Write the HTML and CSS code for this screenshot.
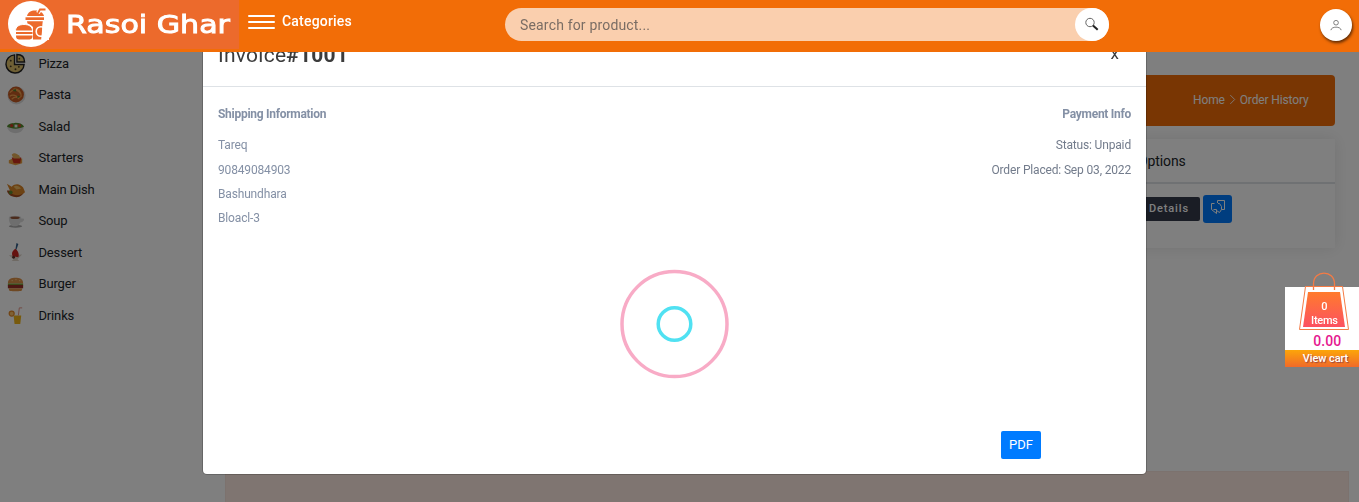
FILE: index.html
```html
<!DOCTYPE html>
<html lang="en">
<head>
<meta charset="utf-8">
<title>Rasoi Ghar - Order History</title>
<link rel="stylesheet" href="styles.css">
</head>
<body>
<header class="topbar">
  <div class="brand">
    <svg class="brand-mark" viewBox="0 0 48 48"><circle cx="24" cy="24" r="23" fill="#fff"/>
      <g fill="#ec6a2c"><path d="M20 16c1-4 4-5.500 8-5.500 5 0 8 2 9 5.500z"/><path d="M31 13l2-3.500h5.500" fill="none" stroke="#fff" stroke-width="4"/><path d="M31 13l2-3.500h5.500" fill="none" stroke="#ec6a2c" stroke-width="1.800"/><path d="M18.500 17.300h18.500v2.700H18.500z"/><path d="M20 21.300h15.800L34.300 39.500H26V27c-2-2-3.500-3-5.500-3.500z"/><circle cx="34" cy="31.500" r="4.800" fill="none" stroke="#fff" stroke-width="1.600"/><path d="M36 21h6v19h-7.500z" fill="#fff"/><path d="M8.500 31c0-4.500 3.500-6.500 8.500-6.500s8.500 2 8.500 6.500z" stroke="#fff" stroke-width="1"/><path d="M9 32h16.500v2H9zM9 35.500h16.500c0 3-1 4-4 4H13c-3 0-4-1-4-4z"/></g>
    </svg>
    <svg class="brand-name" viewBox="0 0 166 32"><text x="0" y="25" textLength="164" lengthAdjust="spacingAndGlyphs">Rasoi Ghar</text></svg>
  </div>
  <div class="categories"><span class="bars"><i></i><i></i><i></i></span><span class="categories-label">Categories</span></div>
  <div class="search"><span>Search for product...</span>
    <button class="search-btn" aria-label="Search"><svg viewBox="0 0 16 16"><circle cx="6" cy="5.500" r="4.200" fill="none" stroke="#666" stroke-width="1"/><path d="M9 8.500l4.700 4.300" stroke="#222" stroke-width="2"/></svg></button>
  </div>
  <button class="user" aria-label="Account"><svg viewBox="0 0 14 14" fill="none" stroke="#666" stroke-width=".9"><circle cx="6.500" cy="4" r="2.500"/><path d="M1 12c.5-4.300 10.500-4.300 11 0"/></svg></button>
</header>

<div class="page">
  <nav class="sidebar">
    <a><svg viewBox="0 0 22 22"><path d="M10 2a9.500 9.500 0 1 0 10 10H10z" fill="#dfc06a" stroke="#222" stroke-width="1.500"/><path d="M12.500 1.500v8h8c0-5-3-8-8-8z" fill="#dfc06a" stroke="#222" stroke-width="1.500"/><g fill="#443822"><circle cx="6" cy="8" r="1"/><circle cx="6" cy="14" r="1"/><circle cx="11" cy="17" r="1"/><circle cx="14.500" cy="14.500" r="1"/><circle cx="15" cy="6" r=".9"/></g></svg><span>Pizza</span></a>
    <a><svg viewBox="0 0 22 22"><circle cx="12" cy="12" r="9.500" fill="#ddd"/><circle cx="11.500" cy="11" r="8.300" fill="#c45a22"/><path d="M5 9c4-5 9-3 12 2M5 13c5-5 9 4 12 0M7 16c3-3 6-3 8 0M9 5c5 0 8 3 8 8" fill="none" stroke="#f3a14e" stroke-width="1.200"/><path d="M8 7l3-2 1 3zM13 12l3 1-3 2z" fill="#4b822e"/></svg><span>Pasta</span></a>
    <a><svg viewBox="0 0 22 22"><path d="M2 11h18c-1 5-5 7-9 7s-8-2-9-7z" fill="#ddd"/><path d="M2 11c2-4 6-3 9-4 4 0 7 1 9 4-5 3-13 3-18 0z" fill="#548b2d"/><circle cx="7" cy="10" r="1.700" fill="#cc3820"/><circle cx="15" cy="10" r="1.700" fill="#d64426"/><path d="M10 9h3v3h-3z" fill="#eee"/></svg><span>Salad</span></a>
    <a><svg viewBox="0 0 22 22"><path d="M4 14l4-2h10v5l-7 2-7-2z" fill="#e9a042"/><path d="M7 11h10l-1 6H9z" fill="#cf2f1d"/><path d="M7 8c3-3 5-1 8 1l1 3H9z" fill="#e6ae58"/></svg><span>Starters</span></a>
    <a><svg viewBox="0 0 22 22"><path d="M2 12h18c0 4-4 7-8 7s-9-2-10-7z" fill="#a44b1c"/><path d="M2 5l5 3c4-4 9-3 12 1l2 5c-5 4-12 4-15 0z" fill="#d98427"/><path d="M9 8c3-2 6 0 8 2l-5 1z" fill="#f2bc62"/><circle cx="6" cy="14" r="2" fill="#5d862d"/></svg><span>Main Dish</span></a>
    <a><svg viewBox="0 0 22 22"><ellipse cx="11" cy="17" rx="7" ry="1.500" fill="#aaa"/><path d="M4 8h13c0 5-2 9-7 9-4 0-6-4-6-9zM17 9h2c2 0 1 4-3 4" fill="#ddd"/><ellipse cx="10.500" cy="8" rx="6.500" ry="2" fill="#ddd"/><ellipse cx="10.500" cy="8.200" rx="5" ry="1.300" fill="#98583b"/></svg><span>Soup</span></a>
    <a><svg viewBox="0 0 22 22"><path d="M4 14l14-1-5 5 2 2H7l2-2z" fill="#ded4c8"/><path d="M8 15c-2-4 1-7 3-8 3 3 4 5 3 9z" fill="#ca241e"/><path d="M11 7l1-6 2 1-2 6z" fill="#315d88"/><circle cx="9" cy="16" r="1.500" fill="#623128"/></svg><span>Dessert</span></a>
    <a><svg viewBox="0 0 22 22"><path d="M3 11c0-5 4-6 8-6s8 1 8 6z" fill="#dc9147"/><path d="M3 11h16v2H3z" fill="#779d35"/><path d="M3 12.500h16V16H3z" fill="#982f26"/><path d="M4 16h14c0 3-1 3-4 3H8c-3 0-4 0-4-3z" fill="#dc9147"/><path d="M7 8h1M11 7h1M15 8h1" stroke="#ffe0a0"/></svg><span>Burger</span></a>
    <a><svg viewBox="0 0 22 22"><circle cx="7" cy="9" r="2.600" fill="#ffc368" stroke="#e58928" stroke-width="1.300"/><path d="M9 11h8l-1 9h-6z" fill="#f0b519"/><path d="M14 11l1-8h3" fill="none" stroke="#e49183" stroke-width="1"/></svg><span>Drinks</span></a>
  </nav>
  <main class="content">
    <section class="crumbs"><span>Home</span><svg viewBox="0 0 8 10"><path d="M2 1l4 4-4 4" fill="none" stroke="#fff" stroke-width=".8"/></svg><span>Order History</span></section>
    <section class="orders">
      <div class="orders-head">Options</div>
      <div class="orders-row"><button class="details">Details</button><button class="copy" aria-label="Refund"><svg viewBox="0 0 16 16" fill="none" stroke="#fff" stroke-width="1"><path d="M7.500 4V1.500h7v9h-3"/><path d="M4.500 4.500h-3v6l5 4v-4h-3M8 4.500h1.500l2 3v3l-2 3-3-2"/></svg></button></div>
    </section>
    <footer class="footer"></footer>
  </main>
</div>

<div class="backdrop">
  <div class="modal">
    <div class="modal-head"><h1>Invoice<b>#1001</b></h1><span class="close">x</span></div>
    <div class="modal-body">
      <div class="info"><h2>Shipping Information</h2><p>Tareq</p><p>90849084903</p><p>Bashundhara</p><p>Bloacl-3</p></div>
      <div class="info info-right"><h2>Payment Info</h2><p>Status: Unpaid</p><p>Order Placed: Sep 03, 2022</p></div>
    </div>
    <div class="loader"><svg viewBox="0 0 110 110" fill="none"><circle cx="55.500" cy="55" r="52.500" stroke="#f8abc6" stroke-width="3.500"/><circle cx="55.500" cy="55" r="16.300" stroke="#50e1f2" stroke-width="3.500"/></svg></div>
    <div class="modal-foot"><button class="pdf">PDF</button></div>
  </div>
</div>

<aside class="cart">
  <div class="cart-box">
    <svg class="bag" viewBox="0 0 52 59"><defs><linearGradient id="bag" x2="0" y2="1"><stop stop-color="#ff7b2d"/><stop offset="1" stop-color="#fc5161"/></linearGradient></defs><path d="M7.500 14.500h37l6 43h-49z" fill="#fff" stroke="#f47b45"/><path d="M10 20h32l5 35H5z" fill="url(#bag)"/><path d="M15.500 18v-6C15.500-2.500 36.500-2.500 36.500 12v6" fill="none" stroke="#f47b45" stroke-width="1.300"/><text x="26.500" y="38">0</text><text x="26.500" y="52" textLength="27">Items</text></svg>
    <div class="total">0.00</div>
  </div>
  <div class="view-cart">View cart</div>
</aside>
</body>
</html>
```
FILE: styles.css
```css
* { box-sizing: border-box; }
body { margin: 0; height: 502px; overflow: hidden; background: #fff; font-family: Roboto, "Liberation Sans", sans-serif; font-size: 13px; color: #212529; }
button { border: 0; padding: 0; font: inherit; display: flex; align-items: center; justify-content: center; }
h1, h2, p { margin: 0; }
.topbar { position: fixed; inset: 0 0 auto; z-index: 10; height: 52px; background: #f26d07; display: flex; align-items: flex-start; }
.brand { width: 239px; height: 49px; background: #ec6a2c; padding: 0 0 0 7px; display: flex; }
.brand-mark { width: 48px; height: 48px; }
.brand-name { width: 166px; height: 32px; margin: 8px 0 0 11px; }
.brand-name text { font-family: "DejaVu Sans", sans-serif; font-size: 25px; fill: #fff; stroke: #fff; stroke-width: .9; }
.categories { display: flex; gap: 7px; margin: 13px 0 0 9px; width: 257px; color: #fff; font-size: 14px; font-weight: 500; line-height: 17px; }
.categories-label { letter-spacing: .2px; }
.bars { width: 27px; display: flex; flex-direction: column; gap: 4px; padding-top: 2px; }
.bars i { height: 2px; background: #fff; border-radius: 1px; flex: none; }
.search { width: 604px; height: 33px; margin-top: 8px; border-radius: 17px; background: #facfae; display: flex; justify-content: space-between; align-items: center; padding-left: 15px; font-size: 14px; color: #7a6d64; letter-spacing: .17px; }
.search-btn { width: 34px; height: 33px; border-radius: 17px; background: #fff; }
.search-btn svg { width: 16px; height: 16px; }
.user { width: 32px; height: 32px; border-radius: 50%; background: #fff; margin: 9px 7px 0 auto; box-shadow: 1px 2px 3px rgba(0,0,0,.6); }
.user svg { width: 13px; height: 13px; }
.page { display: flex; height: 502px; padding-top: 47.500px; }
.sidebar { width: 225px; }
.sidebar a { display: flex; align-items: center; height: 31.500px; padding-left: 5px; gap: 12.500px; letter-spacing: -.16px; }
.sidebar svg { width: 21px; height: 21px; }
.content { width: 1124px; display: flex; flex-direction: column; }
.crumbs { height: 51px; width: 1110px; margin-top: 27.500px; background: #f26d07; border-radius: 4px; color: #fff; font-size: 12px; display: flex; align-items: center; justify-content: flex-end; padding: 0 26.500px 2px 0; gap: 3px; letter-spacing: -.14px; }
.crumbs svg { width: 9px; height: 11px; }
.orders { width: 1110px; height: 109px; margin-top: 13px; box-shadow: 0 0 15px rgba(0,0,0,.1); }
.orders-head { height: 45px; border-bottom: 2px solid #dee2e6; padding: 12px 0 0 913px; font-size: 14px; line-height: 20px; letter-spacing: -.1px; }
.orders-row { padding: 11px 103px 0 0; display: flex; justify-content: flex-end; gap: 3px; }
.details { width: 64px; height: 24px; margin-top: 2px; padding: 0 0 2px 2px; background: #343a4b; border-radius: 2px; color: #fff; font-size: 11px; font-weight: 500; letter-spacing: .85px; }
.copy { width: 29px; height: 28px; border-radius: 3px; background: #007bff; }
.copy svg { width: 16px; height: 16px; margin-top: -4px; }
.footer { margin-top: auto; height: 31px; background: #ffebe2; border: 1px solid #f9e4dc; border-bottom: 0; }
.backdrop { position: fixed; inset: 0; background: rgba(0,0,0,.5); z-index: 5; padding: 20px 213px 28px 203px; display: flex; }
.modal { flex: 1; background: #fff; border-radius: 0 0 4px 4px; box-shadow: 0 0 0 1px rgba(0,0,0,.2); display: flex; flex-direction: column; }
.modal-head { height: 67px; flex: none; border-bottom: 1px solid #dee2e6; padding: 20px 27px 0 15px; display: flex; justify-content: space-between; color: #3c3c3c; }
.modal-head h1 { font-size: 21px; line-height: 30px; font-weight: 400; letter-spacing: .25px; }
.close { font-size: 17px; line-height: 27px; }
.modal-body { display: flex; justify-content: space-between; padding: 18px 15px 0; height: 182px; color: #8490a5; font-size: 12px; line-height: 18px; letter-spacing: -.16px; }
.info h2 { font-size: 12px; line-height: 18px; font-weight: 700; margin-bottom: 13px; letter-spacing: -.28px; }
.info p { margin-bottom: 6.200px; }
.info p:first-of-type { margin-bottom: 6.800px; }
.info-right { text-align: right; }
.info-right p { color: #737c8c; }
.loader { display: flex; justify-content: center; height: 110px; padding-right: 1px; }
.loader svg { width: 110px; height: 110px; }
.modal-foot { display: flex; justify-content: flex-end; padding: 52px 105px 0 0; }
.pdf { width: 40px; height: 28px; padding-bottom: 1px; background: #007bff; border-radius: 2px; color: #fff; font-size: 13px; }
.cart { position: fixed; z-index: 12; right: 0; top: 287px; width: 74px; text-align: center; }
.cart-box { height: 63px; background: #fff; padding-left: 7px; }
.bag { display: block; width: 52px; height: 59px; margin: 0 0 0 6px; position: relative; top: -15px; }
.bag text { font-size: 11px; font-weight: 500; fill: #fff; text-anchor: middle; }
.total { color: #e5178f; font-size: 14px; font-weight: 500; line-height: 18px; margin-top: -14px; padding-left: 3.500px; }
.view-cart { height: 17px; line-height: 17px; padding-left: 7px; background: linear-gradient(#fca509, #f16a29); color: #fff; font-size: 11px; font-weight: 500; letter-spacing: -.1px; text-shadow: 1px 1px 1px #944; }
```
